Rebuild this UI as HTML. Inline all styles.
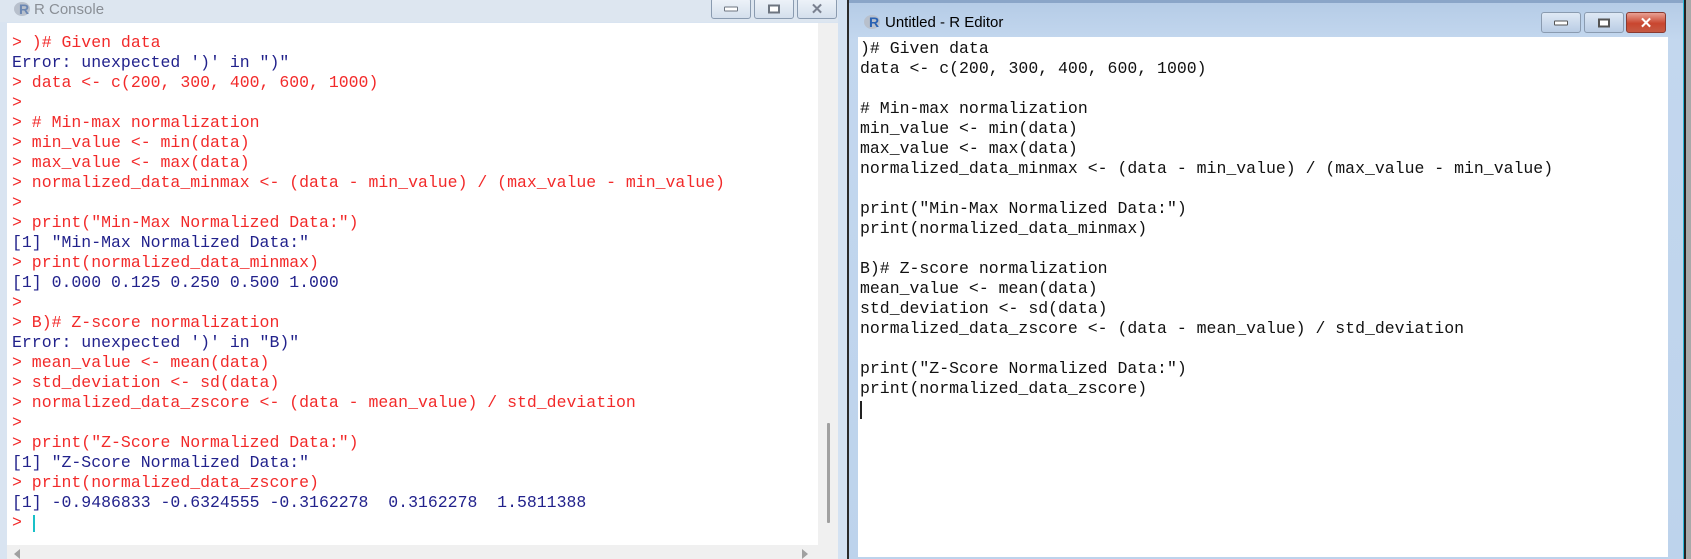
<!DOCTYPE html>
<html><head><meta charset="utf-8"><style>
*{margin:0;padding:0;box-sizing:border-box}
body{width:1691px;height:559px;overflow:hidden;background:#a9a9a9;position:relative;font-family:"Liberation Sans",sans-serif}
.abs{position:absolute}
pre{font-family:"Liberation Mono","Courier New",monospace;font-size:16.5px;line-height:20px;white-space:pre;position:absolute}
.r{color:#f22a2a}.b{color:#22228c}
.btn{position:absolute;height:21px;width:40px;border:1px solid #8a9bb0;border-radius:3px;background:linear-gradient(#eef3f9,#d4dfec)}
.btn i{position:absolute;left:50%;top:50%;transform:translate(-50%,-50%)}
</style></head><body>
<!-- Left window -->
<div class="abs" style="left:0;top:0;width:848px;height:559px;background:#d9e4f1"></div>
<div class="abs" style="left:0;top:0;width:848px;height:22px;background:#dde6f0"></div>
<div class="abs" style="left:14px;top:2px;width:16px;height:14px;border-radius:50%;background:#b8c0cc"></div>
<div class="abs" style="left:19px;top:1px;font:bold 14px 'Liberation Sans';color:#6b87b3">R</div>
<div class="abs" style="left:34px;top:1px;font-size:15px;color:#8a8f96">R Console</div>
<div class="btn" style="left:711px;top:-2px"><i style="width:14px;height:5px;border:1px solid #6d7580;background:#fff;border-radius:1px"></i></div>
<div class="btn" style="left:754px;top:-2px"><i style="width:12px;height:9px;border:2px solid #6d7580;background:#fff"></i></div>
<div class="btn" style="left:797px;top:-2px"><i style="font:bold 15px 'Liberation Sans';color:#7a8190">✕</i></div>
<div class="abs" style="left:7px;top:23px;width:811px;height:522px;background:#fff"></div>
<div class="abs" style="left:818px;top:23px;width:20px;height:536px;background:#f0f0f0"></div>
<div class="abs" style="left:827px;top:423px;width:3px;height:100px;background:#a0a0a0;border-radius:1px"></div>
<div class="abs" style="left:7px;top:545px;width:811px;height:14px;background:#f0f0f0"></div>
<div class="abs" style="left:14px;top:549px;width:0;height:0;border-top:5px solid transparent;border-bottom:5px solid transparent;border-right:6px solid #a0a0a0"></div>
<div class="abs" style="left:802px;top:549px;width:0;height:0;border-top:5px solid transparent;border-bottom:5px solid transparent;border-left:6px solid #a0a0a0"></div>
<div class="abs" style="left:838px;top:0;width:10px;height:559px;background:#d4e2f2"></div>
<div class="abs" style="left:847px;top:0;width:2px;height:559px;background:#2a2a2a"></div>
<pre style="left:12px;top:33px"><span class="r">&gt; )# Given data</span>
<span class="b">Error: unexpected ')' in ")"</span>
<span class="r">&gt; data &lt;- c(200, 300, 400, 600, 1000)</span>
<span class="r">&gt;</span>
<span class="r">&gt; # Min-max normalization</span>
<span class="r">&gt; min_value &lt;- min(data)</span>
<span class="r">&gt; max_value &lt;- max(data)</span>
<span class="r">&gt; normalized_data_minmax &lt;- (data - min_value) / (max_value - min_value)</span>
<span class="r">&gt;</span>
<span class="r">&gt; print("Min-Max Normalized Data:")</span>
<span class="b">[1] "Min-Max Normalized Data:"</span>
<span class="r">&gt; print(normalized_data_minmax)</span>
<span class="b">[1] 0.000 0.125 0.250 0.500 1.000</span>
<span class="r">&gt;</span>
<span class="r">&gt; B)# Z-score normalization</span>
<span class="b">Error: unexpected ')' in "B)"</span>
<span class="r">&gt; mean_value &lt;- mean(data)</span>
<span class="r">&gt; std_deviation &lt;- sd(data)</span>
<span class="r">&gt; normalized_data_zscore &lt;- (data - mean_value) / std_deviation</span>
<span class="r">&gt;</span>
<span class="r">&gt; print("Z-Score Normalized Data:")</span>
<span class="b">[1] "Z-Score Normalized Data:"</span>
<span class="r">&gt; print(normalized_data_zscore)</span>
<span class="b">[1] -0.9486833 -0.6324555 -0.3162278  0.3162278  1.5811388</span>
<span class="r">&gt; </span></pre>
<div class="abs" style="left:33px;top:515px;width:2px;height:17px;background:#19c0c8"></div>

<!-- Right window -->
<div class="abs" style="left:849px;top:0;width:835px;height:559px;background:linear-gradient(#b4cbe6,#c3d7ee 40px,#bdd3ec)"></div>
<div class="abs" style="left:849px;top:0;width:835px;height:3px;background:#8aa5c8"></div>
<div class="abs" style="left:864px;top:15px;width:16px;height:14px;border-radius:50%;background:#b8c0cc"></div>
<div class="abs" style="left:869px;top:14px;font:bold 14px 'Liberation Sans';color:#2a62b3">R</div>
<div class="abs" style="left:885px;top:14px;font-size:15px;color:#000">Untitled - R Editor</div>
<div class="btn" style="left:1541px;top:12px;background:linear-gradient(#dfe9f5,#b9cce4)"><i style="width:14px;height:5px;border:1px solid #555;background:#fff;border-radius:1px"></i></div>
<div class="btn" style="left:1584px;top:12px;background:linear-gradient(#dfe9f5,#b9cce4)"><i style="width:12px;height:9px;border:2px solid #555;background:#fff"></i></div>
<div class="btn" style="left:1626px;top:12px;border-color:#8b3a30;background:linear-gradient(#e8a195,#c9462f 55%,#c65a44)"><i style="font:bold 15px 'Liberation Sans';color:#fff">✕</i></div>
<div class="abs" style="left:858px;top:37px;width:810px;height:520px;background:#fff"></div>
<div class="abs" style="left:1684px;top:0;width:2px;height:559px;background:#222"></div>
<div class="abs" style="left:1683px;top:0;width:1px;height:559px;background:#29b5d6"></div>
<pre style="left:860px;top:39px;color:#111">)# Given data
data &lt;- c(200, 300, 400, 600, 1000)

# Min-max normalization
min_value &lt;- min(data)
max_value &lt;- max(data)
normalized_data_minmax &lt;- (data - min_value) / (max_value - min_value)

print("Min-Max Normalized Data:")
print(normalized_data_minmax)

B)# Z-score normalization
mean_value &lt;- mean(data)
std_deviation &lt;- sd(data)
normalized_data_zscore &lt;- (data - mean_value) / std_deviation

print("Z-Score Normalized Data:")
print(normalized_data_zscore)</pre>
<div class="abs" style="left:860px;top:401px;width:2px;height:18px;background:#222"></div>
</body></html>
